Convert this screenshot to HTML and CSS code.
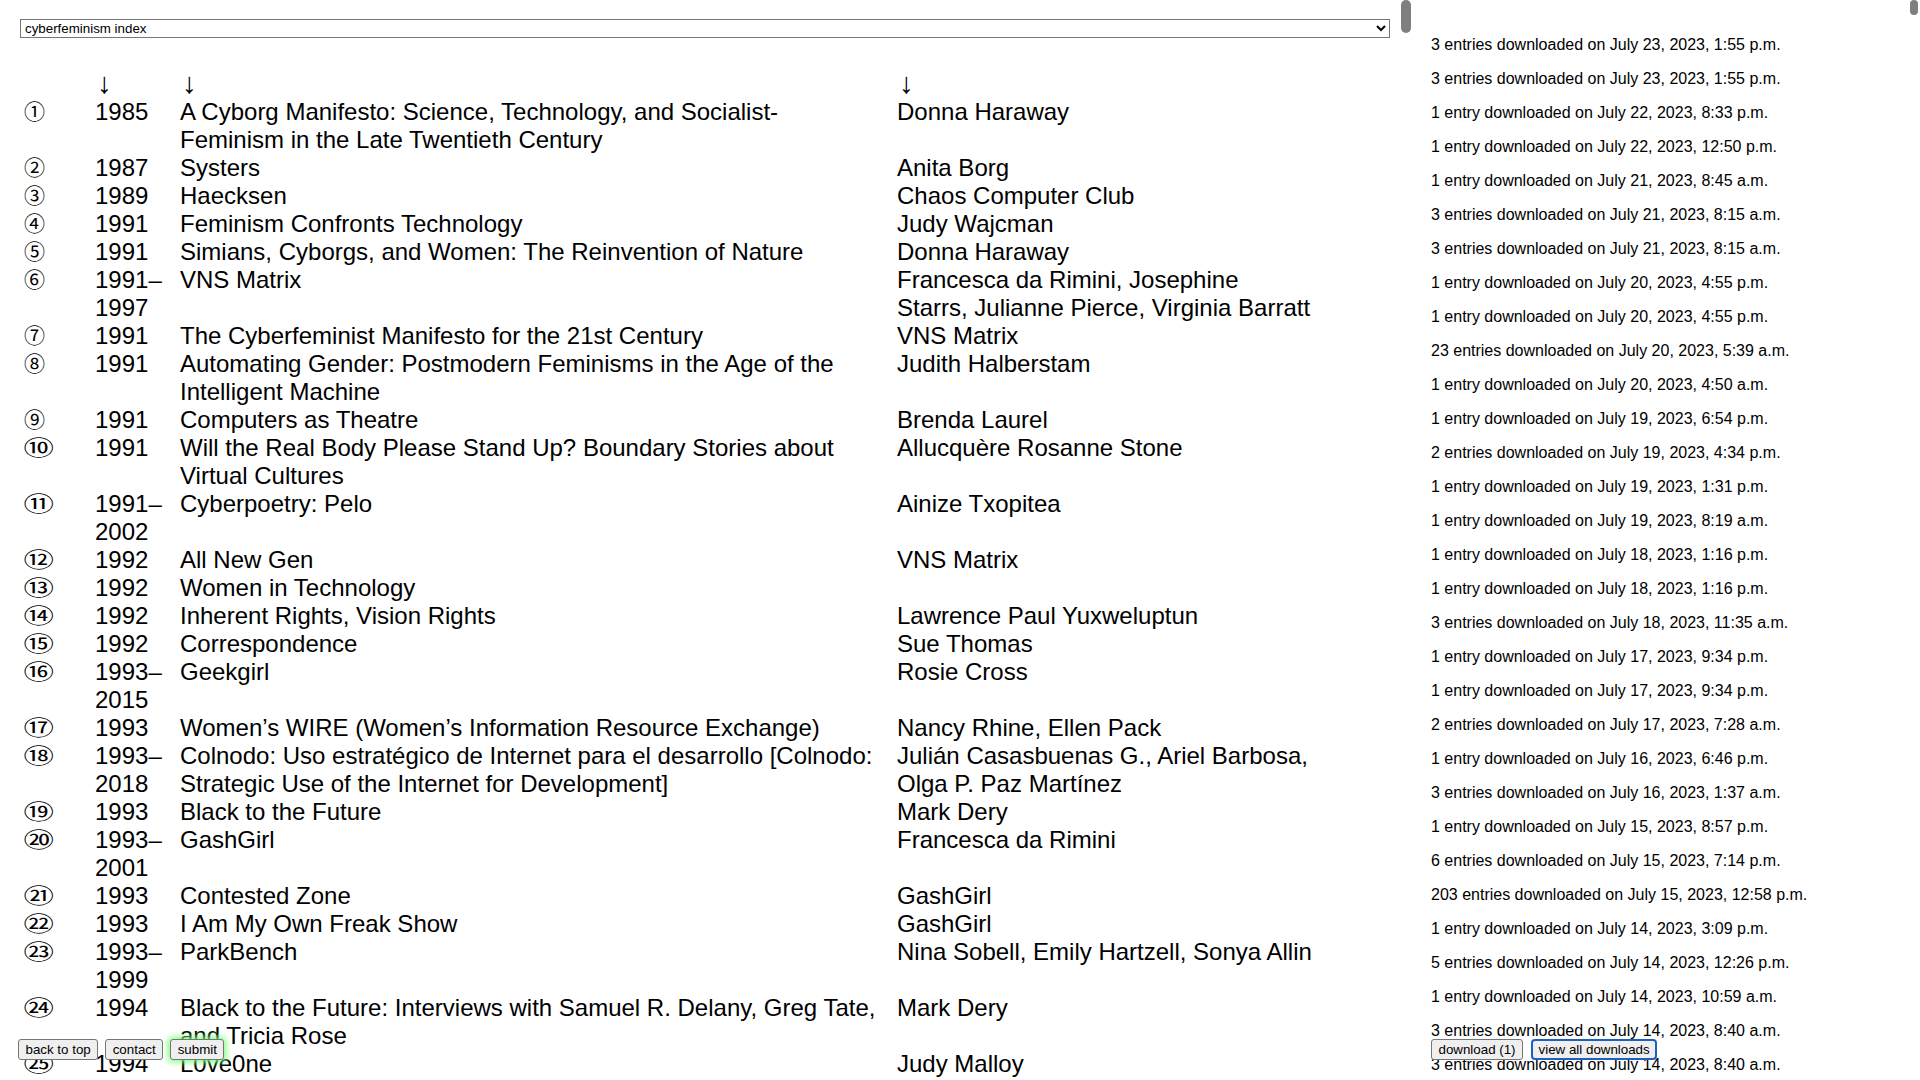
FILE: index.html
```html
<!DOCTYPE html>
<html lang="en">
<head>
<meta charset="utf-8">
<title>cyberfeminism index</title>
<link rel="stylesheet" href="styles.css">
</head>
<body>
<div class="layout">
  <main class="index-pane">
    <div class="index-scroll">
      <select class="nav-select"><option>cyberfeminism index</option></select>
      <div class="entries">
        <div class="row head"><span></span><span class="arrow">↓</span><span class="arrow">↓</span><span class="arrow">↓</span></div>
        <div class="row"><span class="num">①</span><span class="year">1985</span><span class="title">A Cyborg Manifesto: Science, Technology, and Socialist-Feminism in the Late Twentieth Century</span><span class="author">Donna Haraway</span></div>
        <div class="row"><span class="num">②</span><span class="year">1987</span><span class="title">Systers</span><span class="author">Anita Borg</span></div>
        <div class="row"><span class="num">③</span><span class="year">1989</span><span class="title">Haecksen</span><span class="author">Chaos Computer Club</span></div>
        <div class="row"><span class="num">④</span><span class="year">1991</span><span class="title">Feminism Confronts Technology</span><span class="author">Judy Wajcman</span></div>
        <div class="row"><span class="num">⑤</span><span class="year">1991</span><span class="title">Simians, Cyborgs, and Women: The Reinvention of Nature</span><span class="author">Donna Haraway</span></div>
        <div class="row"><span class="num">⑥</span><span class="year">1991–1997</span><span class="title">VNS Matrix</span><span class="author">Francesca da Rimini, Josephine Starrs, Julianne Pierce, Virginia Barratt</span></div>
        <div class="row"><span class="num">⑦</span><span class="year">1991</span><span class="title">The Cyberfeminist Manifesto for the 21st Century</span><span class="author">VNS Matrix</span></div>
        <div class="row"><span class="num">⑧</span><span class="year">1991</span><span class="title">Automating Gender: Postmodern Feminisms in the Age of the Intelligent Machine</span><span class="author">Judith Halberstam</span></div>
        <div class="row"><span class="num">⑨</span><span class="year">1991</span><span class="title">Computers as Theatre</span><span class="author">Brenda Laurel</span></div>
        <div class="row"><span class="num wide">⑩</span><span class="year">1991</span><span class="title">Will the Real Body Please Stand Up? Boundary Stories about Virtual Cultures</span><span class="author">Allucquère Rosanne Stone</span></div>
        <div class="row"><span class="num wide">⑪</span><span class="year">1991–2002</span><span class="title">Cyberpoetry: Pelo</span><span class="author">Ainize Txopitea</span></div>
        <div class="row"><span class="num wide">⑫</span><span class="year">1992</span><span class="title">All New Gen</span><span class="author">VNS Matrix</span></div>
        <div class="row"><span class="num wide">⑬</span><span class="year">1992</span><span class="title">Women in Technology</span><span class="author"></span></div>
        <div class="row"><span class="num wide">⑭</span><span class="year">1992</span><span class="title">Inherent Rights, Vision Rights</span><span class="author">Lawrence Paul Yuxweluptun</span></div>
        <div class="row"><span class="num wide">⑮</span><span class="year">1992</span><span class="title">Correspondence</span><span class="author">Sue Thomas</span></div>
        <div class="row"><span class="num wide">⑯</span><span class="year">1993–2015</span><span class="title">Geekgirl</span><span class="author">Rosie Cross</span></div>
        <div class="row"><span class="num wide">⑰</span><span class="year">1993</span><span class="title">Women’s WIRE (Women’s Information Resource Exchange)</span><span class="author">Nancy Rhine, Ellen Pack</span></div>
        <div class="row"><span class="num wide">⑱</span><span class="year">1993–2018</span><span class="title">Colnodo: Uso estratégico de Internet para el desarrollo [Colnodo: Strategic Use of the Internet for Development]</span><span class="author">Julián Casasbuenas G., Ariel Barbosa, Olga P. Paz Martínez</span></div>
        <div class="row"><span class="num wide">⑲</span><span class="year">1993</span><span class="title">Black to the Future</span><span class="author">Mark Dery</span></div>
        <div class="row"><span class="num wide">⑳</span><span class="year">1993–2001</span><span class="title">GashGirl</span><span class="author">Francesca da Rimini</span></div>
        <div class="row"><span class="num wide">㉑</span><span class="year">1993</span><span class="title">Contested Zone</span><span class="author">GashGirl</span></div>
        <div class="row"><span class="num wide">㉒</span><span class="year">1993</span><span class="title">I Am My Own Freak Show</span><span class="author">GashGirl</span></div>
        <div class="row"><span class="num wide">㉓</span><span class="year">1993–1999</span><span class="title">ParkBench</span><span class="author">Nina Sobell, Emily Hartzell, Sonya Allin</span></div>
        <div class="row"><span class="num wide">㉔</span><span class="year">1994</span><span class="title">Black to the Future: Interviews with Samuel R. Delany, Greg Tate, and Tricia Rose</span><span class="author">Mark Dery</span></div>
        <div class="row"><span class="num wide">㉕</span><span class="year">1994</span><span class="title">L0ve0ne</span><span class="author">Judy Malloy</span></div>
      </div>
    </div>
    <div class="thumb index-thumb"></div>
    <div class="actions index-actions">
      <button type="button">back to top</button>
      <button type="button">contact</button>
      <button type="button" class="submit">submit</button>
    </div>
  </main>
  <aside class="downloads-pane">
    <div class="downloads-scroll">
      <p>3 entries downloaded on July 23, 2023, 1:55 p.m.</p>
      <p>3 entries downloaded on July 23, 2023, 1:55 p.m.</p>
      <p>1 entry downloaded on July 22, 2023, 8:33 p.m.</p>
      <p>1 entry downloaded on July 22, 2023, 12:50 p.m.</p>
      <p>1 entry downloaded on July 21, 2023, 8:45 a.m.</p>
      <p>3 entries downloaded on July 21, 2023, 8:15 a.m.</p>
      <p>3 entries downloaded on July 21, 2023, 8:15 a.m.</p>
      <p>1 entry downloaded on July 20, 2023, 4:55 p.m.</p>
      <p>1 entry downloaded on July 20, 2023, 4:55 p.m.</p>
      <p>23 entries downloaded on July 20, 2023, 5:39 a.m.</p>
      <p>1 entry downloaded on July 20, 2023, 4:50 a.m.</p>
      <p>1 entry downloaded on July 19, 2023, 6:54 p.m.</p>
      <p>2 entries downloaded on July 19, 2023, 4:34 p.m.</p>
      <p>1 entry downloaded on July 19, 2023, 1:31 p.m.</p>
      <p>1 entry downloaded on July 19, 2023, 8:19 a.m.</p>
      <p>1 entry downloaded on July 18, 2023, 1:16 p.m.</p>
      <p>1 entry downloaded on July 18, 2023, 1:16 p.m.</p>
      <p>3 entries downloaded on July 18, 2023, 11:35 a.m.</p>
      <p>1 entry downloaded on July 17, 2023, 9:34 p.m.</p>
      <p>1 entry downloaded on July 17, 2023, 9:34 p.m.</p>
      <p>2 entries downloaded on July 17, 2023, 7:28 a.m.</p>
      <p>1 entry downloaded on July 16, 2023, 6:46 p.m.</p>
      <p>3 entries downloaded on July 16, 2023, 1:37 a.m.</p>
      <p>1 entry downloaded on July 15, 2023, 8:57 p.m.</p>
      <p>6 entries downloaded on July 15, 2023, 7:14 p.m.</p>
      <p>203 entries downloaded on July 15, 2023, 12:58 p.m.</p>
      <p>1 entry downloaded on July 14, 2023, 3:09 p.m.</p>
      <p>5 entries downloaded on July 14, 2023, 12:26 p.m.</p>
      <p>1 entry downloaded on July 14, 2023, 10:59 a.m.</p>
      <p>3 entries downloaded on July 14, 2023, 8:40 a.m.</p>
      <p>3 entries downloaded on July 14, 2023, 8:40 a.m.</p>
    </div>
    <div class="thumb downloads-thumb"></div>
    <div class="actions downloads-actions">
      <button type="button">download (1)</button>
      <button type="button" class="view-all">view all downloads</button>
    </div>
  </aside>
</div>
</body>
</html>
```
FILE: styles.css
```css
html, body {
  margin: 0;
  height: 100%;
}

body {
  font-family: "Liberation Sans", Arial, Helvetica, sans-serif;
  color: #000;
  background: #fff;
  overflow: hidden;
}

.layout {
  display: flex;
  height: 100vh;
}

.index-pane {
  position: relative;
  width: 1414px;
  flex: none;
}

.index-scroll {
  height: 100%;
  box-sizing: border-box;
  overflow-y: auto;
  scrollbar-width: none;
  padding: 19px 24px 0 20px;
}

.nav-select {
  display: block;
  width: 100%;
  height: 19px;
  margin: 0 0 32px;
  font: 13.333px "Liberation Sans", Arial, sans-serif;
  color: #000;
  background: #fff;
  border: 1px solid #767676;
  border-radius: 0;
}

.row {
  display: grid;
  grid-template-columns: 75px 85px 717px 416px;
  font-size: 24px;
  line-height: 28px;
}

.title {
  padding-right: 18px;
}

.num {
  font-family: "Noto Sans CJK JP", "DejaVu Sans", sans-serif;
  font-size: 21px;
  line-height: 24px;
  padding-left: 4px;
}

.num.wide {
  transform: scaleX(1.45);
  transform-origin: 5px 0;
}

.head {
  height: 28px;
}

.arrow {
  font-size: 29px;
  line-height: 26px;
  padding-left: 2px;
}

.downloads-pane {
  position: relative;
  flex: 1;
  min-width: 0;
}

.downloads-scroll {
  height: 100%;
  box-sizing: border-box;
  overflow-y: auto;
  scrollbar-width: none;
  padding: 20px 16px 0 17px;
  font-size: 16px;
}

.downloads-scroll p {
  margin: 16px 0;
  line-height: 18px;
}

.thumb {
  position: absolute;
  top: 0;
  background: #7f7f7f;
  border-radius: 5px;
}

.index-thumb {
  right: 3px;
  width: 10px;
  height: 33px;
}

.downloads-thumb {
  right: 2px;
  width: 8px;
  height: 15px;
  border-radius: 4px;
}

.actions {
  position: absolute;
  bottom: 20px;
  display: flex;
  gap: 7px;
}

.index-actions {
  left: 18px;
}

.downloads-actions {
  left: 17px;
  gap: 8px;
}

.actions button {
  height: 21px;
  margin: 0;
  padding: 1px 6.5px;
  font: 13.333px "Liberation Sans", Arial, sans-serif;
  color: #000;
  background: #efefef;
  border: 1px solid #767676;
  border-radius: 3px;
}

.actions .submit {
  box-shadow: 0 0 6px 2px #7dff7d;
}

.actions .view-all {
  border: 2px solid #1d5fc2;
  border-radius: 4px;
  padding: 0 5.5px;
}
```
